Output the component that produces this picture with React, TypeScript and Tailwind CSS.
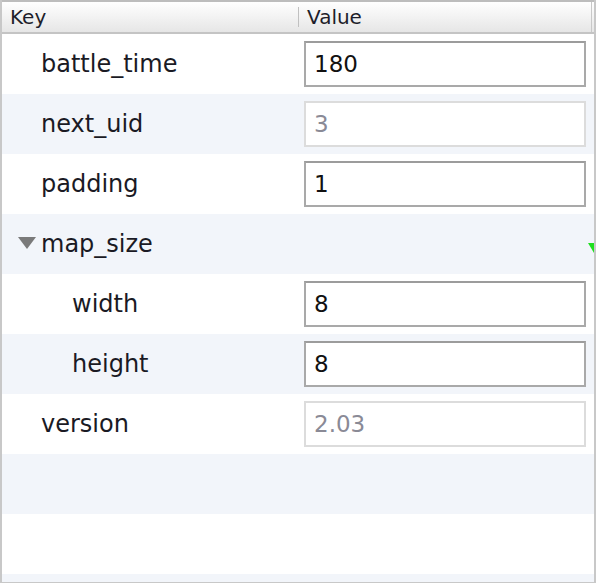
import React from "react";

type Row = {
  key: string;
  value?: string;
  depth: number;
  disabled?: boolean;
  group?: boolean;
};

const rows: Row[] = [
  { key: "battle_time", value: "180", depth: 0 },
  { key: "next_uid", value: "3", depth: 0, disabled: true },
  { key: "padding", value: "1", depth: 0 },
  { key: "map_size", depth: 0, group: true },
  { key: "width", value: "8", depth: 1 },
  { key: "height", value: "8", depth: 1 },
  { key: "version", value: "2.03", depth: 0, disabled: true },
];

const font = { fontFamily: '"DejaVu Sans", "Lucida Grande", sans-serif' };

export default function App() {
  const filler = [0, 1, 2];
  return (
    <div
      className="w-[596px] h-[583px] bg-white overflow-hidden border-l-2 border-r-2 border-b border-[#c8c8c8] flex flex-col"
      style={font}
    >
      {/* HEADER */}
      <div className="h-[34px] shrink-0 flex border-t-2 border-b-2 border-t-[#bdbdbd] border-b-[#c4c4c4] bg-gradient-to-b from-white to-[#e6e6e6] text-[20px] text-[#1e1e2a]">
        <div className="w-[296px] pl-[8px] flex items-center">Key</div>
        <div className="w-px my-[5px] bg-[#c0c0c0]" />
        <div className="flex-1 pl-[8px] flex items-center">Value</div>
        <div className="w-px bg-[#c8c8c8]" />
        <div className="w-[2px]" />
      </div>

      {/* ROWS */}
      {rows.map((row, i) => (
        <div
          key={row.key}
          className={`relative h-[60px] shrink-0 flex items-center ${i % 2 === 1 ? "bg-[#f2f5fa]" : "bg-white"}`}
        >
          <div
            className={`w-[300px] flex items-center text-[24px] text-[#1a1a24] ${row.depth === 1 ? "pl-[70px]" : row.group ? "pl-[16px]" : "pl-[39px]"}`}
          >
            {row.group && (
              <svg width="18" height="14" viewBox="0 0 18 14" className="mr-[5px] mt-[-2px]">
                <polygon points="0,1 18,1 9,13" fill="#7a7a7a" />
              </svg>
            )}
            {row.key}
          </div>
          {row.value !== undefined && (
            <div
              className={`ml-[2px] w-[282px] h-[46px] bg-white border-2 flex items-center pl-[8px] text-[23px] ${row.disabled ? "border-[#dcdcdc] text-[#8a8a96]" : "border-[#a9a9a9] border-t-[#9c9c9c] text-[#111]"}`}
            >
              {row.value}
            </div>
          )}
          {row.group && (
            <svg width="6" height="10" viewBox="0 0 6 10" className="absolute right-0 top-[29px]">
              <polygon points="0,0 12,0 6,10" fill="#1ee01e" />
            </svg>
          )}
        </div>
      ))}

      {filler.map((n) => (
        <div
          key={n}
          className={`h-[60px] shrink-0 ${(rows.length + n) % 2 === 1 ? "bg-[#f2f5fa]" : "bg-white"}`}
        />
      ))}
    </div>
  );
}
